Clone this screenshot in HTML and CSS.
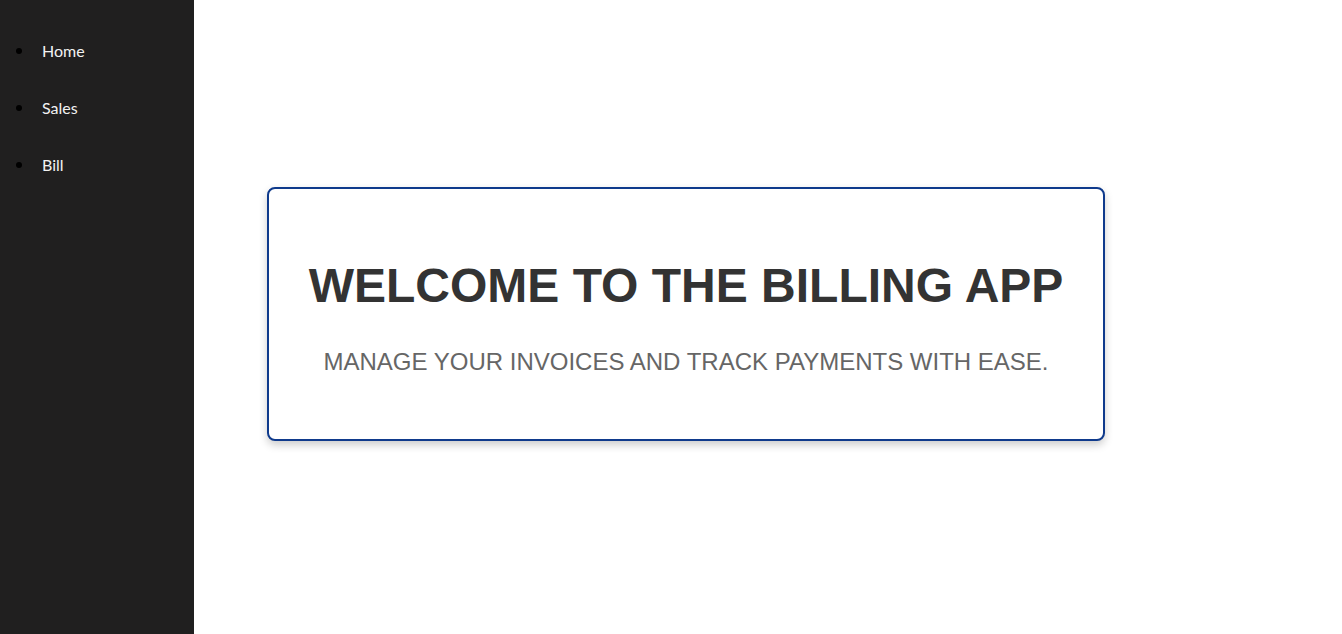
FILE: index.html
```html
<!DOCTYPE html>
<html lang="en">
<head>
<meta charset="utf-8">
<title>Billing App</title>
<link rel="stylesheet" href="styles.css">
</head>
<body>
<div class="layout">
  <nav class="sidebar">
    <ul class="nav-list">
      <li class="nav-item"><a class="nav-link" href="#">Home</a></li>
      <li class="nav-item"><a class="nav-link" href="#">Sales</a></li>
      <li class="nav-item"><a class="nav-link" href="#">Bill</a></li>
    </ul>
  </nav>
  <main class="main">
    <section class="welcome-card">
      <h1 class="welcome-title">WELCOME TO THE BILLING APP</h1>
      <p class="welcome-sub">Manage your invoices and track payments with ease.</p>
    </section>
  </main>
</div>
</body>
</html>
```

FILE: styles.css
```css
* { box-sizing: border-box; }
html, body { margin: 0; padding: 0; height: 100%; }
body { background: #ffffff; font-family: "Liberation Sans", Arial, sans-serif; }
.layout { display: flex; height: 634px; }
.sidebar { width: 194px; flex: none; background: #201f1f; padding-top: 41px; }
.nav-list { margin: 0; padding-left: 42px; list-style: none; }
.nav-item { font-family: "Lato", "Open Sans", sans-serif; font-size: 16px; line-height: 20px; margin-bottom: 37px; }
.nav-item::before { content: ""; display: inline-block; width: 6px; height: 6px; border-radius: 50%; background: #000; margin-left: -26px; margin-right: 20px; vertical-align: 3px; }
.nav-link { color: #f2f2f2; text-decoration: none; }
.main { flex: 1; display: flex; align-items: center; padding-left: 73px; }
.welcome-card { width: 838px; height: 254px; padding-top: 5px; border: 2px solid #0f3a8c; border-radius: 8px; background: #fff; box-shadow: 0 4px 8px rgba(0,0,0,0.2); display: flex; flex-direction: column; align-items: center; justify-content: center; margin-top: -6px; }
.welcome-title { margin: 0; font-size: 48px; font-weight: bold; color: #333; line-height: 58px; }
.welcome-sub { margin: 33px 0 0; font-size: 24px; color: #666; text-transform: uppercase; line-height: 28px; }
```
